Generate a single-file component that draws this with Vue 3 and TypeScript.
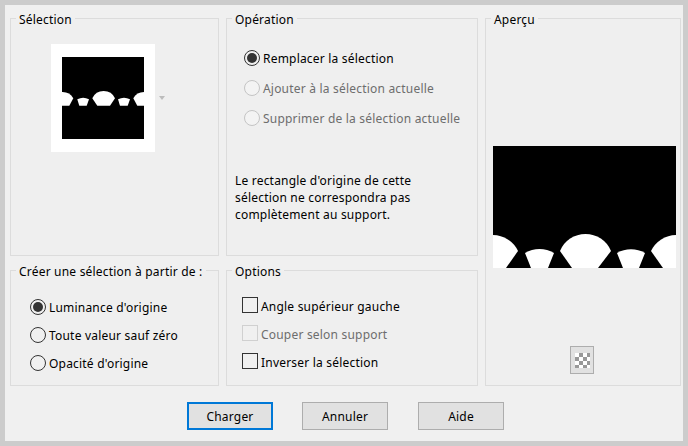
<script setup lang="ts">
interface Opt { label: string; on?: boolean; off?: boolean }
const ops: Opt[] = [
  { label: 'Remplacer la sélection', on: true },
  { label: 'Ajouter à la sélection actuelle', off: true },
  { label: 'Supprimer de la sélection actuelle', off: true },
]
const sources: Opt[] = [
  { label: "Luminance d'origine", on: true },
  { label: 'Toute valeur sauf zéro' },
  { label: "Opacité d'origine" },
]
const checks: Opt[] = [
  { label: 'Angle supérieur gauche' },
  { label: 'Couper selon support', off: true },
  { label: 'Inverser la sélection' },
]
const thumbShapes = [
  'M0 35A12.5 12.5 0 0 1 11.3 41.3L7.3 48.7H0Z',
  'M15.3 42.3A12.5 12.5 0 0 1 27 42.3L24.7 48.7H17.3Z',
  'M30.3 41.3A12.5 12.5 0 0 1 53 41.3L48 48.7H35.3Z',
  'M56 42.3A12.5 12.5 0 0 1 68 42.3L65.7 48.7H58Z',
  'M71.3 41.3A12.5 12.5 0 0 1 82 35V48.7H75.3Z',
]
const previewShapes = [
  'M0 89A28 28 0 0 1 25 105L13 122H0Z',
  'M32 107A28 28 0 0 1 61 107L55 122H38Z',
  'M67 105A27.6 27.6 0 0 1 118 105L105 122H79Z',
  'M124 107A28 28 0 0 1 152 107L146 122H130Z',
  'M158 105A28 28 0 0 1 183 89V122H170Z',
]
const buttons = ['Charger', 'Annuler', 'Aide']
</script>

<template>
  <div class="window">
    <div class="groups">
      <section class="group sel">
        <h2>Sélection</h2>
        <div class="thumb-row">
          <div class="thumb">
            <svg width="82" height="82" viewBox="0 0 82 82">
              <rect width="82" height="82" fill="#000" />
              <path v-for="d in thumbShapes" :key="d" :d="d" fill="#fff" />
            </svg>
          </div>
          <span class="arrow"></span>
        </div>
      </section>

      <section class="group op">
        <h2>Opération</h2>
        <div class="radios">
          <label v-for="o in ops" :key="o.label" class="row" :class="{ off: o.off }">
            <span class="radio" :class="{ on: o.on }"></span>{{ o.label }}
          </label>
        </div>
        <p class="note">Le rectangle d'origine de cette sélection ne correspondra pas complètement au support.</p>
      </section>

      <section class="group prev">
        <h2>Aperçu</h2>
        <svg class="preview" width="183" height="122" viewBox="0 0 183 122">
          <rect width="183" height="122" fill="#000" />
          <path v-for="d in previewShapes" :key="d" :d="d" fill="#fff" />
        </svg>
        <button class="mini" type="button" aria-label="Transparence"><span class="checker"></span></button>
      </section>

      <section class="group src">
        <h2>Créer une sélection à partir de :</h2>
        <div class="list">
          <label v-for="o in sources" :key="o.label" class="row">
            <span class="radio" :class="{ on: o.on }"></span>{{ o.label }}
          </label>
        </div>
      </section>

      <section class="group opts">
        <h2>Options</h2>
        <div class="list checks">
          <label v-for="o in checks" :key="o.label" class="row" :class="{ off: o.off }">
            <span class="box"></span>{{ o.label }}
          </label>
        </div>
      </section>
    </div>

    <div class="actions">
      <button v-for="(b, i) in buttons" :key="b" type="button" class="btn" :class="{ primary: i === 0 }">{{ b }}</button>
    </div>
  </div>
</template>

<style>
html, body { margin: 0; background: #cccccc; }
</style>

<style scoped>
.window {
  box-sizing: border-box;
  width: 678px;
  height: 436px;
  margin: 5px 0 0 5px;
  padding: 13px 0 0 5px;
  background: #f0f0f0;
  font-family: "Noto Sans", sans-serif;
  font-size: 12px;
  letter-spacing: 0.2px;
  color: #000;
}
.groups {
  display: grid;
  grid-template-columns: 209px 252px 196px;
  grid-template-rows: 238px 116px;
  column-gap: 7px;
  row-gap: 14px;
}
.group {
  box-sizing: border-box;
  display: flex;
  flex-direction: column;
  border: 1px solid #dcdcdc;
  background: #efefef;
  min-width: 0;
}
.group h2 {
  align-self: flex-start;
  margin: -8px 0 0 5px;
  padding: 0 3px;
  height: 18px;
  line-height: 18px;
  font-size: 12px;
  font-weight: 400;
  background: linear-gradient(#f0f0f0 8px, #efefef 8px);
  white-space: nowrap;
}
.prev { grid-column: 3; grid-row: 1 / 3; align-items: flex-start; }
.src { grid-column: 1; grid-row: 2; }
.opts { grid-column: 2; grid-row: 2; }

.thumb-row { display: flex; align-items: center; margin: 15px 0 0 40px; }
.thumb {
  box-sizing: border-box;
  width: 104px;
  height: 108px;
  padding: 13px 11px;
  background: #fff;
}
.thumb svg, .preview { display: block; }
.arrow {
  width: 0;
  height: 0;
  margin: 0 0 0 4px;
  border-left: 3.5px solid transparent;
  border-right: 3.5px solid transparent;
  border-top: 4px solid #bcbcbc;
}

.row {
  display: flex;
  align-items: center;
  height: 20px;
  white-space: nowrap;
}
.row.off { color: #6d6d6d; }
.radios { display: flex; flex-direction: column; gap: 10px; margin: 19px 0 0 17px; }
.list { display: flex; flex-direction: column; gap: 8px; margin: 16px 0 0 19px; }
.checks { margin: 15px 0 0 15px; }
.radio {
  box-sizing: border-box;
  flex: none;
  width: 16px;
  height: 16px;
  margin-right: 3px;
  border: 1px solid #333;
  border-radius: 50%;
  background: #f0f0f0;
  display: flex;
  align-items: center;
  justify-content: center;
}
.radio.on::after {
  content: "";
  width: 10px;
  height: 10px;
  border-radius: 50%;
  background: #333;
}
.off .radio { border-color: #c4c4c4; background: #f3f3f3; }
.box {
  box-sizing: border-box;
  flex: none;
  width: 16px;
  height: 16px;
  margin: -2px 3px 0 0;
  border: 1px solid #333;
  background: #f0f0f0;
}
.off .box { border-color: #d0d0d0; }
.note { margin: 44px 0 0 8px; max-width: 188px; line-height: 17px; }

.preview { margin: 117px 0 0 7px; }
.mini {
  box-sizing: border-box;
  width: 24px;
  height: 28px;
  margin: 78px 0 0 84px;
  padding: 0;
  border: 1px solid #adadad;
  background: #e1e1e1;
  display: flex;
  align-items: center;
  justify-content: center;
}
.checker {
  width: 15px;
  height: 15px;
  background: repeating-conic-gradient(#999 0 25%, #fff 0 50%) 0 0 / 8px 8px;
}

.actions { display: flex; gap: 29px; margin: 16px 0 0 177px; }
.btn {
  box-sizing: border-box;
  width: 86px;
  height: 28px;
  padding: 0;
  border: 1px solid #adadad;
  background: #e1e1e1;
  font: inherit;
  letter-spacing: inherit;
  color: #000;
}
.btn:last-child { margin-left: 1px; }
.btn.primary { border: 2px solid #0078d7; }
</style>
